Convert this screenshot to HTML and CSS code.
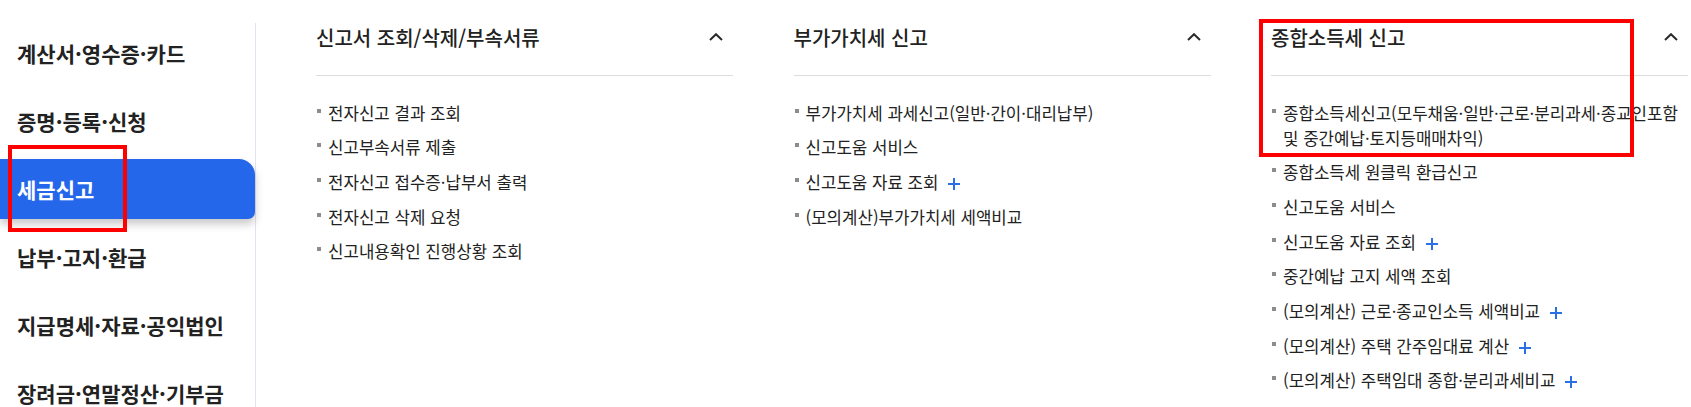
FILE: index.html
```html
<!DOCTYPE html>
<html lang="ko">
<head>
    <meta charset="utf-8">
    <link rel="stylesheet" href="styles.css">
</head>
<body>
    <div class="page">
        <aside class="side">
            <ul class="side-menu">
                <li><a href="#">계산서·영수증·카드</a></li>
                <li><a href="#">증명·등록·신청</a></li>
                <li class="active"><a href="#">세금신고</a></li>
                <li><a href="#">납부·고지·환급</a></li>
                <li><a href="#">지급명세·자료·공익법인</a></li>
                <li><a href="#">장려금·연말정산·기부금</a></li>
            </ul>
        </aside>

        <main class="menu-cols">
            <section class="menu-col">
                <h2 class="col-title">신고서 조회/삭제/부속서류
                    <svg class="chev" width="14" height="8" viewBox="0 0 14 8"><polyline points="1,7 7,1.2 13,7" /></svg>
                </h2>
                <ul class="links">
                    <li>전자신고 결과 조회</li>
                    <li>신고부속서류 제출</li>
                    <li>전자신고 접수증·납부서 출력</li>
                    <li>전자신고 삭제 요청</li>
                    <li>신고내용확인 진행상황 조회</li>
                </ul>
            </section>

            <section class="menu-col">
                <h2 class="col-title">부가가치세 신고
                    <svg class="chev" width="14" height="8" viewBox="0 0 14 8"><polyline points="1,7 7,1.2 13,7" /></svg>
                </h2>
                <ul class="links">
                    <li>부가가치세 과세신고(일반·간이·대리납부)</li>
                    <li>신고도움 서비스</li>
                    <li>신고도움 자료 조회 <svg class="plus" width="12" height="12" viewBox="0 0 12 12"><path d="M6 0V12M0 6H12" /></svg></li>
                    <li>(모의계산)부가가치세 세액비교</li>
                </ul>
            </section>

            <section class="menu-col">
                <h2 class="col-title">종합소득세 신고
                    <svg class="chev" width="14" height="8" viewBox="0 0 14 8"><polyline points="1,7 7,1.2 13,7" /></svg>
                </h2>
                <ul class="links">
                    <li>종합소득세신고(모두채움·일반·근로·분리과세·종교인포함 및 중간예납·토지등매매차익)</li>
                    <li>종합소득세 원클릭 환급신고</li>
                    <li>신고도움 서비스</li>
                    <li>신고도움 자료 조회 <svg class="plus" width="12" height="12" viewBox="0 0 12 12"><path d="M6 0V12M0 6H12" /></svg></li>
                    <li>중간예납 고지 세액 조회</li>
                    <li>(모의계산) 근로·종교인소득 세액비교 <svg class="plus" width="12" height="12" viewBox="0 0 12 12"><path d="M6 0V12M0 6H12" /></svg></li>
                    <li>(모의계산) 주택 간주임대료 계산 <svg class="plus" width="12" height="12" viewBox="0 0 12 12"><path d="M6 0V12M0 6H12" /></svg></li>
                    <li>(모의계산) 주택임대 종합·분리과세비교 <svg class="plus" width="12" height="12" viewBox="0 0 12 12"><path d="M6 0V12M0 6H12" /></svg></li>
                </ul>
            </section>
        </main>
    </div>

    <!-- annotation boxes drawn over the capture -->
    <div class="mark mark-side"></div>
    <div class="mark mark-col"></div>
</body>
</html>
```

FILE: styles.css
```css
body {
    margin: 0;
    overflow: hidden;
    background: #fff;
    color: #222;
    font-family: "Noto Sans CJK KR", "Noto Sans", sans-serif;
    position: relative;
}

ul {
    list-style: none;
    margin: 0;
    padding: 0;
}

a {
    color: inherit;
    text-decoration: none;
}

.page {
    display: flex;
    align-items: flex-start;
}

/* left menu */
.side {
    width: 256px;
    flex: none;
    box-sizing: border-box;
    margin-top: 23px;
    border-right: 1px solid #e2e2f6;
}

.side-menu {
    display: flex;
    flex-direction: column;
    gap: 8px;
}

.side-menu li {
    height: 60px;
    line-height: 60px;
    padding-left: 17px;
    font-size: 21px;
    font-weight: 700;
    color: #222;
    white-space: nowrap;
}

.side-menu li.active {
    background: #2467ea;
    color: #fff;
    border-radius: 0 16px 7px 0;
    box-shadow: 0 5px 8px rgba(0, 0, 0, 0.22);
}

/* columns */
.menu-cols {
    display: flex;
    gap: 60.5px;
    padding-left: 60px;
}

.menu-col {
    width: 417px;
    flex: none;
}

.col-title {
    display: flex;
    justify-content: space-between;
    align-items: center;
    margin: 0;
    padding: 23px 10px 22px 0;
    line-height: 30px;
    font-size: 20px;
    font-weight: 500;
    color: #222;
    border-bottom: 1px solid #dddddd;
}

.chev {
    margin-top: -3px;
}

.chev polyline {
    fill: none;
    stroke: #2a2a2a;
    stroke-width: 2;
}

.links {
    display: flex;
    flex-direction: column;
    gap: 9.7px;
    padding-top: 24.5px;
}

.links li {
    position: relative;
    padding-left: 12px;
    font-size: 16.8px;
    line-height: 25px;
    word-break: keep-all;
    color: #222;
}

.links li::before {
    content: "";
    position: absolute;
    left: 1px;
    top: 8px;
    width: 4px;
    height: 4px;
    background: #8c8c8c;
}

.plus {
    margin-left: 5px;
    vertical-align: -1px;
}

.plus path {
    stroke: #2a6fe6;
    stroke-width: 2;
}

/* red annotation frames */
.mark {
    position: absolute;
    border: 4px solid #ff0000;
    box-sizing: border-box;
}

.mark-side {
    left: 8px;
    top: 145px;
    width: 119px;
    height: 87px;
}

.mark-col {
    left: 1259px;
    top: 19px;
    width: 375px;
    height: 138px;
}
```
